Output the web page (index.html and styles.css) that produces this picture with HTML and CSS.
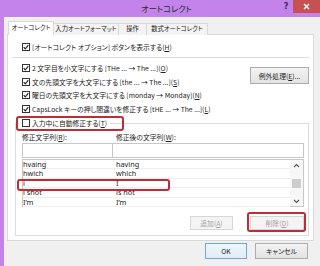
FILE: index.html
```html
<!DOCTYPE html>
<html lang="ja">
<head>
<meta charset="utf-8">
<link rel="stylesheet" href="styles.css">
</head>
<body>
<div class="window">
  <div class="titlebar">
    <div class="title">オートコレクト</div>
    <div class="help">?</div>
    <div class="close"><svg width="7" height="7" viewBox="0 0 7 7"><path d="M1 1L6 6M6 1L1 6" stroke="#fff" stroke-width="1.3"/></svg></div>
  </div>
  <div class="body">
    <div class="tabs">
      <div class="tab active">オートコレクト</div>
      <div class="tab t2">入力オートフォーマット</div>
      <div class="tab t3">操作</div>
      <div class="tab t4">数式オートコレクト</div>
    </div>
    <div class="panel">
      <div class="cb-row first">
        <svg class="cb" viewBox="0 0 8 8" width="8" height="8"><rect x=".5" y=".5" width="7" height="7" fill="#fff" stroke="#333"/><path d="M1.7 4.1l1.6 1.7 3-3.6" fill="none" stroke="#222" stroke-width="1.1"/></svg>
        <span>[オートコレクト オプション] ボタンを表示する(<u>H</u>)</span>
      </div>
      <div class="sep"></div>
      <div class="opts">
        <div class="optlist">
          <div class="cb-row"><svg class="cb" viewBox="0 0 8 8" width="8" height="8"><rect x=".5" y=".5" width="7" height="7" fill="#fff" stroke="#333"/><path d="M1.7 4.1l1.6 1.7 3-3.6" fill="none" stroke="#222" stroke-width="1.1"/></svg><span>2 文字目を小文字にする [THe ... → The ...](<u>O</u>)</span></div>
          <div class="cb-row"><svg class="cb" viewBox="0 0 8 8" width="8" height="8"><rect x=".5" y=".5" width="7" height="7" fill="#fff" stroke="#333"/><path d="M1.7 4.1l1.6 1.7 3-3.6" fill="none" stroke="#222" stroke-width="1.1"/></svg><span>文の先頭文字を大文字にする [the ... → The ...](<u>S</u>)</span></div>
          <div class="cb-row"><svg class="cb" viewBox="0 0 8 8" width="8" height="8"><rect x=".5" y=".5" width="7" height="7" fill="#fff" stroke="#333"/><path d="M1.7 4.1l1.6 1.7 3-3.6" fill="none" stroke="#222" stroke-width="1.1"/></svg><span>曜日の先頭文字を大文字にする [monday → Monday](<u>N</u>)</span></div>
          <div class="cb-row"><svg class="cb" viewBox="0 0 8 8" width="8" height="8"><rect x=".5" y=".5" width="7" height="7" fill="#fff" stroke="#333"/><path d="M1.7 4.1l1.6 1.7 3-3.6" fill="none" stroke="#222" stroke-width="1.1"/></svg><span>CapsLock キーの押し間違いを修正する [tHE ... → The ...](<u>L</u>)</span></div>
        </div>
        <div class="btn exc">例外処理(<u>E</u>)...</div>
      </div>
      <div class="group">
        <div class="cb-row head"><svg class="cb" viewBox="0 0 8 8" width="8" height="8"><rect x=".5" y=".5" width="7" height="7" fill="#fff" stroke="#333"/></svg><span>入力中に自動修正する(<u>T</u>)</span></div>
        <div class="labels"><span class="l1">修正文字列(<u>R</u>):</span><span>修正後の文字列(<u>W</u>):</span></div>
        <div class="inputs"><div class="in in1"></div><div class="in in2"></div></div>
        <div class="list">
          <div class="rows">
            <div class="lrow"><span class="c1">hvaing</span><span>having</span></div>
            <div class="lrow"><span class="c1">hwich</span><span>which</span></div>
            <div class="lrow"><span class="c1">i</span><span>I</span></div>
            <div class="lrow"><span class="c1">i snot</span><span>is not</span></div>
            <div class="lrow"><span class="c1">I’m</span><span>I’m</span></div>
          </div>
          <div class="scroll">
            <svg width="7" height="5" viewBox="0 0 7 5"><path d="M1 4L3.5 1.5L6 4" fill="none" stroke="#555" stroke-width="1.1"/></svg>
            <div class="track"><div class="thumb"></div></div>
            <svg width="7" height="5" viewBox="0 0 7 5"><path d="M1 1L3.5 3.5L6 1" fill="none" stroke="#555" stroke-width="1.1"/></svg>
          </div>
        </div>
        <div class="gbtns">
          <div class="btn dis add">追加(<u>A</u>)</div>
          <div class="btn dis del">削除(<u>D</u>)</div>
        </div>
      </div>
    </div>
    <div class="footer">
      <div class="btn ok">OK</div>
      <div class="btn cancel">キャンセル</div>
    </div>
  </div>
</div>
<div class="hl hl1"></div>
<div class="hl hl2"></div>
<div class="hl hl3"></div>
</body>
</html>
```
FILE: styles.css
```css
* { box-sizing: border-box; margin: 0; padding: 0; }
html, body { width: 320px; height: 266px; overflow: hidden; background: #f0f0f0; }
body {
  position: relative;
  font-family: "Noto Sans CJK JP", "Noto Sans", sans-serif;
  font-size: 6.8px;
  color: #222;
  font-feature-settings: "palt";
}
u { text-decoration: underline; text-underline-offset: 1px; }

.window { display: flex; flex-direction: column; height: 266px; }

.titlebar { flex: none; height: 17px; background: #c383ea; display: flex; align-items: flex-start; }
.title { flex: 1; text-align: center; padding-left: 52px; font-size: 8.2px; line-height: 17px; color: #2b2b2b; }
.help { width: 10px; margin-right: 2px; font-size: 8px; font-weight: bold; line-height: 13px; text-align: center; color: #3a2a55; font-family: "DejaVu Sans", sans-serif; }
.close { width: 27px; height: 13px; background: #c75050; display: flex; align-items: center; justify-content: center; }

.body { flex: 1; display: flex; flex-direction: column; border-left: 4px solid #c383ea; padding-left: 3px; background: #f0f0f0; }

.tabs { display: flex; align-items: flex-end; height: 14px; margin-top: 4px; margin-left: 1px; position: relative; z-index: 1; }
.tab { height: 12px; border: 1px solid #d9d9d9; border-bottom: none; background: #f3f3f3; font-size: 6.3px; line-height: 10px; text-align: center; white-space: nowrap; margin-left: -1px; overflow: hidden; }
.tab.active { height: 14px; width: 46px; background: #fff; line-height: 12px; margin-left: 0; }
.t2 { width: 66px; }
.t3 { width: 29px; }
.t4 { width: 62px; }

.panel { flex: none; width: 307px; height: 207px; margin-top: -1px; border: 1px solid #d9d9d9; background: #fff; display: flex; flex-direction: column; }

.cb-row { display: flex; align-items: center; gap: 2px; height: 13.75px; white-space: nowrap; }
.cb { flex: none; }
.cb-row.first { height: 14px; margin-top: 5px; margin-left: 14px; }
.sep { height: 1px; background: #dcdcdc; margin: 3px 4px 0 4px; }

.opts { display: flex; justify-content: space-between; align-items: flex-start; margin-top: 3px; }
.optlist { margin-left: 14px; }

.btn { display: flex; align-items: center; justify-content: center; border: 1px solid #acacac; background: linear-gradient(#f3f3f3, #e3e3e3); color: #222; white-space: nowrap; }
.btn.dis { border-color: #d6d6d6; background: #f4f4f4; color: #a2a2a2; }
.exc { width: 59px; height: 17px; margin-top: 6px; margin-right: 4px; }

.group { margin: 7px 4px 0 7px; border: 1px solid #dcdcdc; padding: 0 4px 5px 6px; display: flex; flex-direction: column; }
.cb-row.head { height: 14px; margin-top: -8px; margin-left: -3px; padding: 0 3px; background: #fff; align-self: flex-start; }

.labels { display: flex; height: 10px; line-height: 10px; margin-top: 2px; }
.l1 { width: 94px; }
.inputs { display: flex; height: 15px; margin-top: 1px; }
.in { border: 1px solid #c8c8c8; background: #fff; }
.in1 { width: 91px; }
.in2 { flex: 1; margin-left: -1px; }

.list { display: flex; height: 48px; margin-top: 1px; border: 1px solid #c8c8c8; background: #fff; }
.rows { flex: 1; }
.lrow { display: flex; height: 9.4px; line-height: 9px; border-bottom: 1px solid #eeeeee; font-family: "Noto Sans", sans-serif; font-size: 7.3px; }
.c1 { width: 93px; }
.scroll { width: 13px; display: flex; flex-direction: column; align-items: center; justify-content: space-between; padding: 3px 0 2px; background: #f7f7f7; }
.track { flex: 1; width: 100%; display: flex; flex-direction: column; justify-content: center; }
.thumb { width: 9px; height: 9px; margin: 0 auto; background: #cdcdcd; }

.gbtns { display: flex; justify-content: flex-end; gap: 17px; margin-top: 9px; }
.gbtns .btn { height: 14px; }
.add { width: 43px; }
.del { width: 54px; }

.footer { display: flex; justify-content: flex-end; gap: 8px; margin-top: 2px; padding-right: 12px; }
.footer .btn { height: 16px; }
.ok { width: 42px; border-color: #6fa6dd; background: linear-gradient(#eef5fc, #e1ecf7); }
.cancel { width: 53px; }

.hl { position: absolute; border: 2px solid #c42a36; border-radius: 3px; }
.hl1 { left: 16px; top: 116px; width: 108px; height: 15px; }
.hl2 { left: 17px; top: 179px; width: 153px; height: 12px; }
.hl3 { left: 247px; top: 212px; width: 59px; height: 20px; }
```
